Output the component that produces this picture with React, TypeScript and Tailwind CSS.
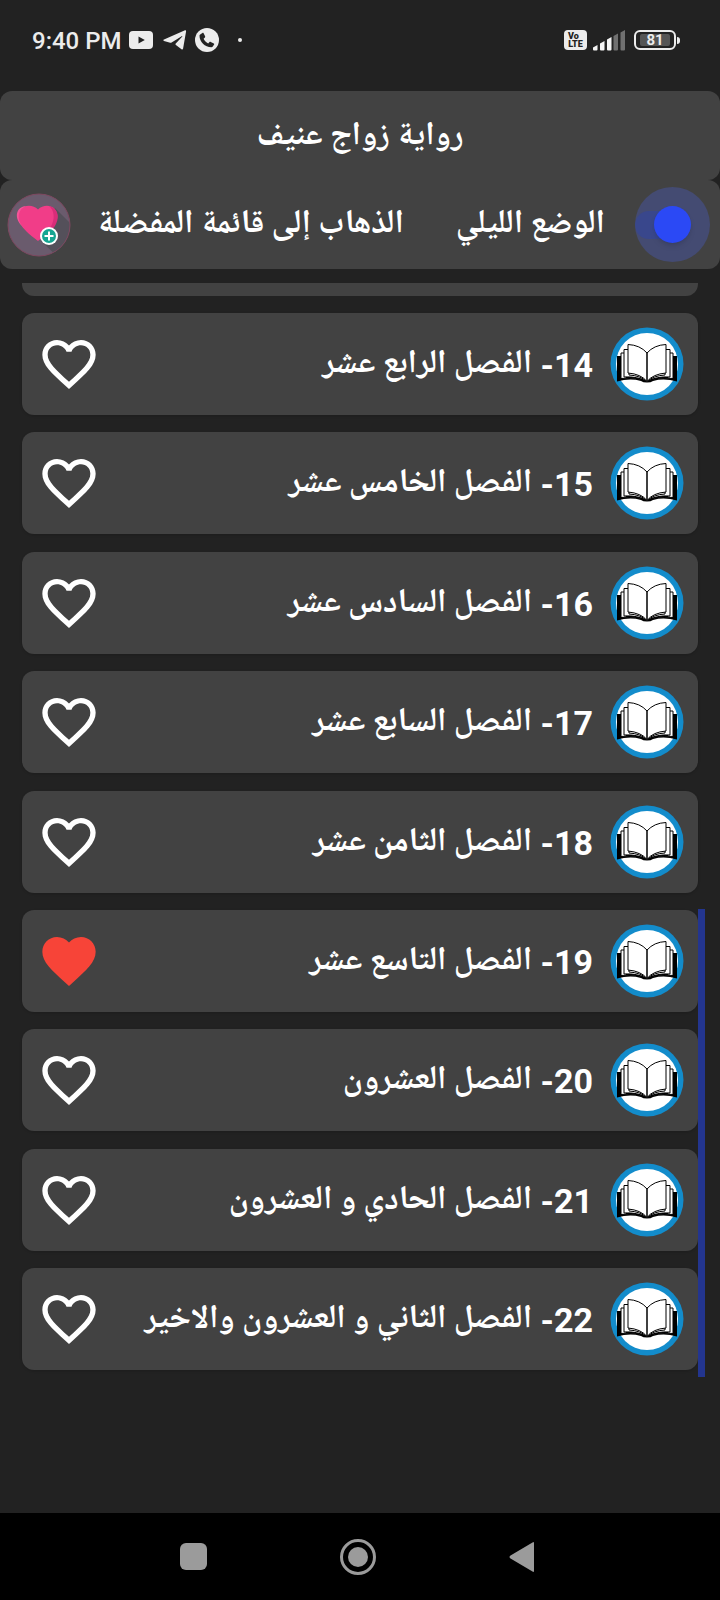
import { useState } from "react";

const chapterTitles = [
  "الفصل الرابع عشر",
  "الفصل الخامس عشر",
  "الفصل السادس عشر",
  "الفصل السابع عشر",
  "الفصل الثامن عشر",
  "الفصل التاسع عشر",
  "الفصل العشرون",
  "الفصل الحادي و العشرون",
  "الفصل الثاني و العشرون والاخير",
];
const firstChapter = 14;

const arabicFont = "font-['Noto_Naskh_Arabic_UI','Noto_Naskh_Arabic','Noto_Sans_Arabic','DejaVu_Sans',sans-serif]";

function StatusBar() {
  return (
    <header dir="ltr" className="flex h-[91px] items-center justify-between pr-10 pl-8 pb-[11px] text-[#ececec]">
      <div className="flex items-center">
        <span className="pt-0.5 font-[Roboto,sans-serif] text-[24px] leading-8 font-medium whitespace-nowrap">9:40 PM</span>
        <svg aria-hidden="true" viewBox="0 0 24 18" className="ml-[7px] h-[18px] w-6">
          <rect width="24" height="18" rx="4" fill="currentColor" />
          <path d="M9.5 5.4v7.2l6.3-3.6z" fill="#222" />
        </svg>
        <svg aria-hidden="true" viewBox="0 0 24 20" className="ml-2.5 h-5 w-6">
          <path d="M1 9.6 22 .3c.8-.3 1.2.1 1.1.9l-3 17.2c-.2 1-.8 1.3-1.600.8l-5.600-4.200c-.6-.5-.6-.9-.1-1.400l6.300-6.900c.5-.5.1-.8-.4-.4L8.600 12.600c-.5.3-.9.3-1.400.2L1 11c-.9-.3-.9-1 0-1.400z" fill="currentColor" />
        </svg>
        <svg aria-hidden="true" viewBox="0 0 24 24" className="ml-2 size-6">
          <circle cx="12" cy="12" r="12" fill="currentColor" />
          <path d="M5.200 6.400 7.400 4.900c.5-.3.900-.2 1.200.3l1.500 3.100c.2.500.1.900-.2 1.300l-1.300 1.200c1 2.100 2.500 3.600 4.600 4.600l1.300-1.300c.4-.4.800-.4 1.300-.2l3 1.500c.5.3.600.700.3 1.200l-1.300 1.900c-.4.500-.8.700-1.400.7C9.900 19.200 4.500 13.800 4.500 7.800c0-.6.2-1 .7-1.400z" fill="#222" />
        </svg>
        <span className="ml-[19px] size-1 rounded-full bg-current" />
      </div>
      <div className="flex items-center">
        <span className="flex h-5 w-[23px] flex-col items-center justify-center rounded-sm bg-[#ececec] font-[Roboto,sans-serif] text-[9px] leading-2 font-black text-[#222]">
          <span className="self-start pl-1">Vo</span>
          <span>LTE</span>
        </span>
        <svg aria-hidden="true" viewBox="0 0 32 21" className="ml-1.5 h-[21px] w-8">
          <path d="M0 17.500 4.500 15v4.500q0 1-1 1H1q-1 0-1-1zM7 13.500 11.500 11v8.500q0 1-1 1H8q-1 0-1-1zM14 9.500 18.500 7v12.500q0 1-1 1H15q-1 0-1-1z" fill="#f4f4f4" />
          <path d="M20.500 6 25 3.500v16q0 1-1 1h-2.500q-1 0-1-1zM27.500 2.500 32 0v19.500q0 1-1 1h-2.500q-1 0-1-1z" fill="#707070" />
        </svg>
        <span className="ml-[9px] flex h-5 w-[42px] items-center justify-center rounded-md border-2 border-[#ececec]">
          <span className="flex h-3 w-[30px] items-center justify-center rounded-xs bg-[#555] font-[Roboto,sans-serif] text-[15px] leading-3 font-bold">81</span>
        </span>
        <span className="ml-px h-[7px] w-[3px] rounded-r-sm bg-[#ececec]" />
      </div>
    </header>
  );
}

function FavoritesIcon() {
  return (
    <svg aria-hidden="true" viewBox="0 0 64 64" className="size-16">
      <defs>
        <clipPath id="badge"><circle cx="32" cy="32" r="31" /></clipPath>
      </defs>
      <circle cx="32" cy="32" r="31" fill="#6a5b6d" />
      <path clipPath="url(#badge)" d="m48 15 22 22v30H54L34 48z" fill="#54505a" />
      <circle cx="32" cy="32" r="31" fill="none" stroke="#7e4860" />
      <path d="M31 16.500c5-5 13-5 17 0 6 8 1 18-17 31.500C13 35 7 24.500 13 16.500c5-5 13-5 18 0z" fill="#f13d88" />
      <path d="M42 13c10 2 12 14 3 24l-8 7 6-9c6-9 4-18-1-22z" fill="#d92d79" />
      <path d="M20 13c-9 2-11 13-4 21-10-9-7-21 4-21z" fill="#f5559a" />
      <circle cx="42" cy="43" r="9" fill="#fff" />
      <circle cx="42" cy="43" r="7" fill="#16a592" />
      <path d="M42 38.500v9M37.500 43h9" stroke="#fff" strokeWidth="2" />
    </svg>
  );
}

function BookIcon() {
  return (
    <svg aria-hidden="true" viewBox="0 0 74 74" className="size-[74px] shrink-0">
      <circle cx="37" cy="37" r="36.500" fill="#138ccb" />
      <circle cx="37" cy="37" r="31" fill="#fff" />
      <path d="M7 29h5v22q14-1.500 25 2.500Q48 49.500 62 51V29h5v25.500Q54 51 43 54q-2 1.500-6 1.500T31 54Q20 51 7 54.500z" fill="#000" />
      <path d="M11 26h5v24.500q13-.5 21 4 8-4.500 21-4V26h5v25.500q-15-2-26 3-11-5-26-3z" fill="#fff" stroke="#000" />
      <path d="M14 22.500h5V48q11 .5 18 6.500 7-6 18-6.500V22.500h5V50q-13-1-23 4.500Q27 49 14 50z" fill="#fff" stroke="#000" />
      <path d="M37 26q-7-8-19-8.500V46q13 1 19 8.500Q43 47 56 46V17.500Q44 18 37 26z" fill="#fff" stroke="#000" />
      <path d="M37 26v28" stroke="#000" strokeWidth="1.500" />
    </svg>
  );
}

function HeartIcon({ filled }: { filled: boolean }) {
  return (
    <svg aria-hidden="true" viewBox="0 0 24 24" className="size-16">
      {filled ? (
        <path
          fill="#f74438"
          d="m12 21.350-1.450-1.320C5.400 15.360 2 12.280 2 8.500 2 5.420 4.420 3 7.500 3c1.740 0 3.410.81 4.500 2.090C13.090 3.810 14.760 3 16.500 3 19.580 3 22 5.420 22 8.500c0 3.780-3.400 6.860-8.550 11.540z"
        />
      ) : (
        <path
          fill="#fff"
          d="M16.500 3c-1.740 0-3.410.81-4.500 2.090C10.910 3.810 9.240 3 7.500 3 4.420 3 2 5.420 2 8.500c0 3.780 3.400 6.860 8.550 11.540L12 21.350l1.450-1.320C18.600 15.360 22 12.280 22 8.500 22 5.420 19.580 3 16.500 3m-4.400 15.550-.1.100-.1-.100C7.140 14.240 4 11.390 4 8.500 4 6.500 5.500 5 7.500 5c1.540 0 3.040.99 3.570 2.360h1.870C13.460 5.990 14.960 5 16.500 5c2 0 3.500 1.500 3.500 3.500 0 2.890-3.140 5.740-7.900 10.050"
        />
      )}
    </svg>
  );
}

export default function App() {
  const [night, setNight] = useState(true);
  const [favorites, setFavorites] = useState<number[]>([19]);
  const toggle = (n: number) =>
    setFavorites((list) => (list.includes(n) ? list.filter((x) => x !== n) : [...list, n]));

  return (
    <div dir="rtl" lang="ar" className={`flex min-h-screen flex-col bg-[#222] font-bold text-white ${arabicFont}`}>
      <StatusBar />
      <h1 className="flex h-[89px] items-center justify-center rounded-xl bg-[#424242] pt-0.5 text-[33px] leading-10">
        رواية زواج عنيف
      </h1>
      <div className="flex h-[89px] items-center justify-between rounded-xl bg-[#424242] pr-[10px] pl-[7px] text-[33px] leading-10 whitespace-nowrap">
        <label className="flex items-center gap-[30px]">
          <span className="relative flex size-[75px] items-center justify-center overflow-hidden rounded-full bg-[#444b72]">
            <span className="absolute left-0 h-7 w-10 rounded-l-full bg-[#39478c]" />
            <input
              type="checkbox"
              checked={night}
              onChange={(e) => setNight(e.target.checked)}
              className="relative size-[37px] appearance-none rounded-full bg-[#2b49f5] shadow-md"
            />
          </span>
          <span>الوضع الليلي</span>
        </label>
        <button type="button" className="flex items-center gap-[26px]">
          <span>الذهاب إلى قائمة المفضلة</span>
          <FavoritesIcon />
        </button>
      </div>
      <main className="relative mt-3.5 flex flex-1 flex-col px-[22px] pb-[143px]">
        <div aria-hidden="true" className="mb-[17px] h-[13px] rounded-b-xl bg-[#424242]" />
        <ul className="flex flex-1 flex-col justify-between">
          {chapterTitles.map((title, i) => {
            const n = firstChapter + i;
            const filled = favorites.includes(n);
            return (
              <li key={n} className="flex h-[102px] items-center justify-between rounded-xl bg-[#424242] pr-[14px] pl-[15px] shadow-sm">
                <a href={`#chapter-${n}`} className="flex items-center gap-[17px]">
                  <BookIcon />
                  <span className="pt-0.5 text-[33px] leading-10 whitespace-nowrap">
                    <span className="font-[Roboto,sans-serif] text-[34px]">{n}- </span>
                    {title}
                  </span>
                </a>
                <button type="button" aria-label="المفضلة" aria-pressed={filled} onClick={() => toggle(n)}>
                  <HeartIcon filled={filled} />
                </button>
              </li>
            );
          })}
        </ul>
        <div aria-hidden="true" className="absolute right-[15px] bottom-[136px] h-[468px] w-[7px] bg-[#23358f]" />
      </main>
      <nav dir="ltr" className="flex h-[87px] items-center justify-center gap-[124px] bg-black pr-[5px] text-[#9b9b9b]">
        <button type="button" aria-label="Recent apps" className="flex size-10 items-center justify-center">
          <span className="size-[27px] rounded-md bg-current" />
        </button>
        <button type="button" aria-label="Home">
          <svg aria-hidden="true" viewBox="0 0 40 40" className="size-10">
            <circle cx="20" cy="20" r="16.500" fill="none" stroke="currentColor" strokeWidth="3" />
            <circle cx="20" cy="20" r="10" fill="currentColor" />
          </svg>
        </button>
        <button type="button" aria-label="Back">
          <svg aria-hidden="true" viewBox="0 0 40 40" className="size-10">
            <path d="M32 6v28q0 1.500-1.500.6L8.500 21.500q-2-1.500 0-3L30.500 5.400Q32 4.500 32 6z" fill="currentColor" />
          </svg>
        </button>
      </nav>
    </div>
  );
}
